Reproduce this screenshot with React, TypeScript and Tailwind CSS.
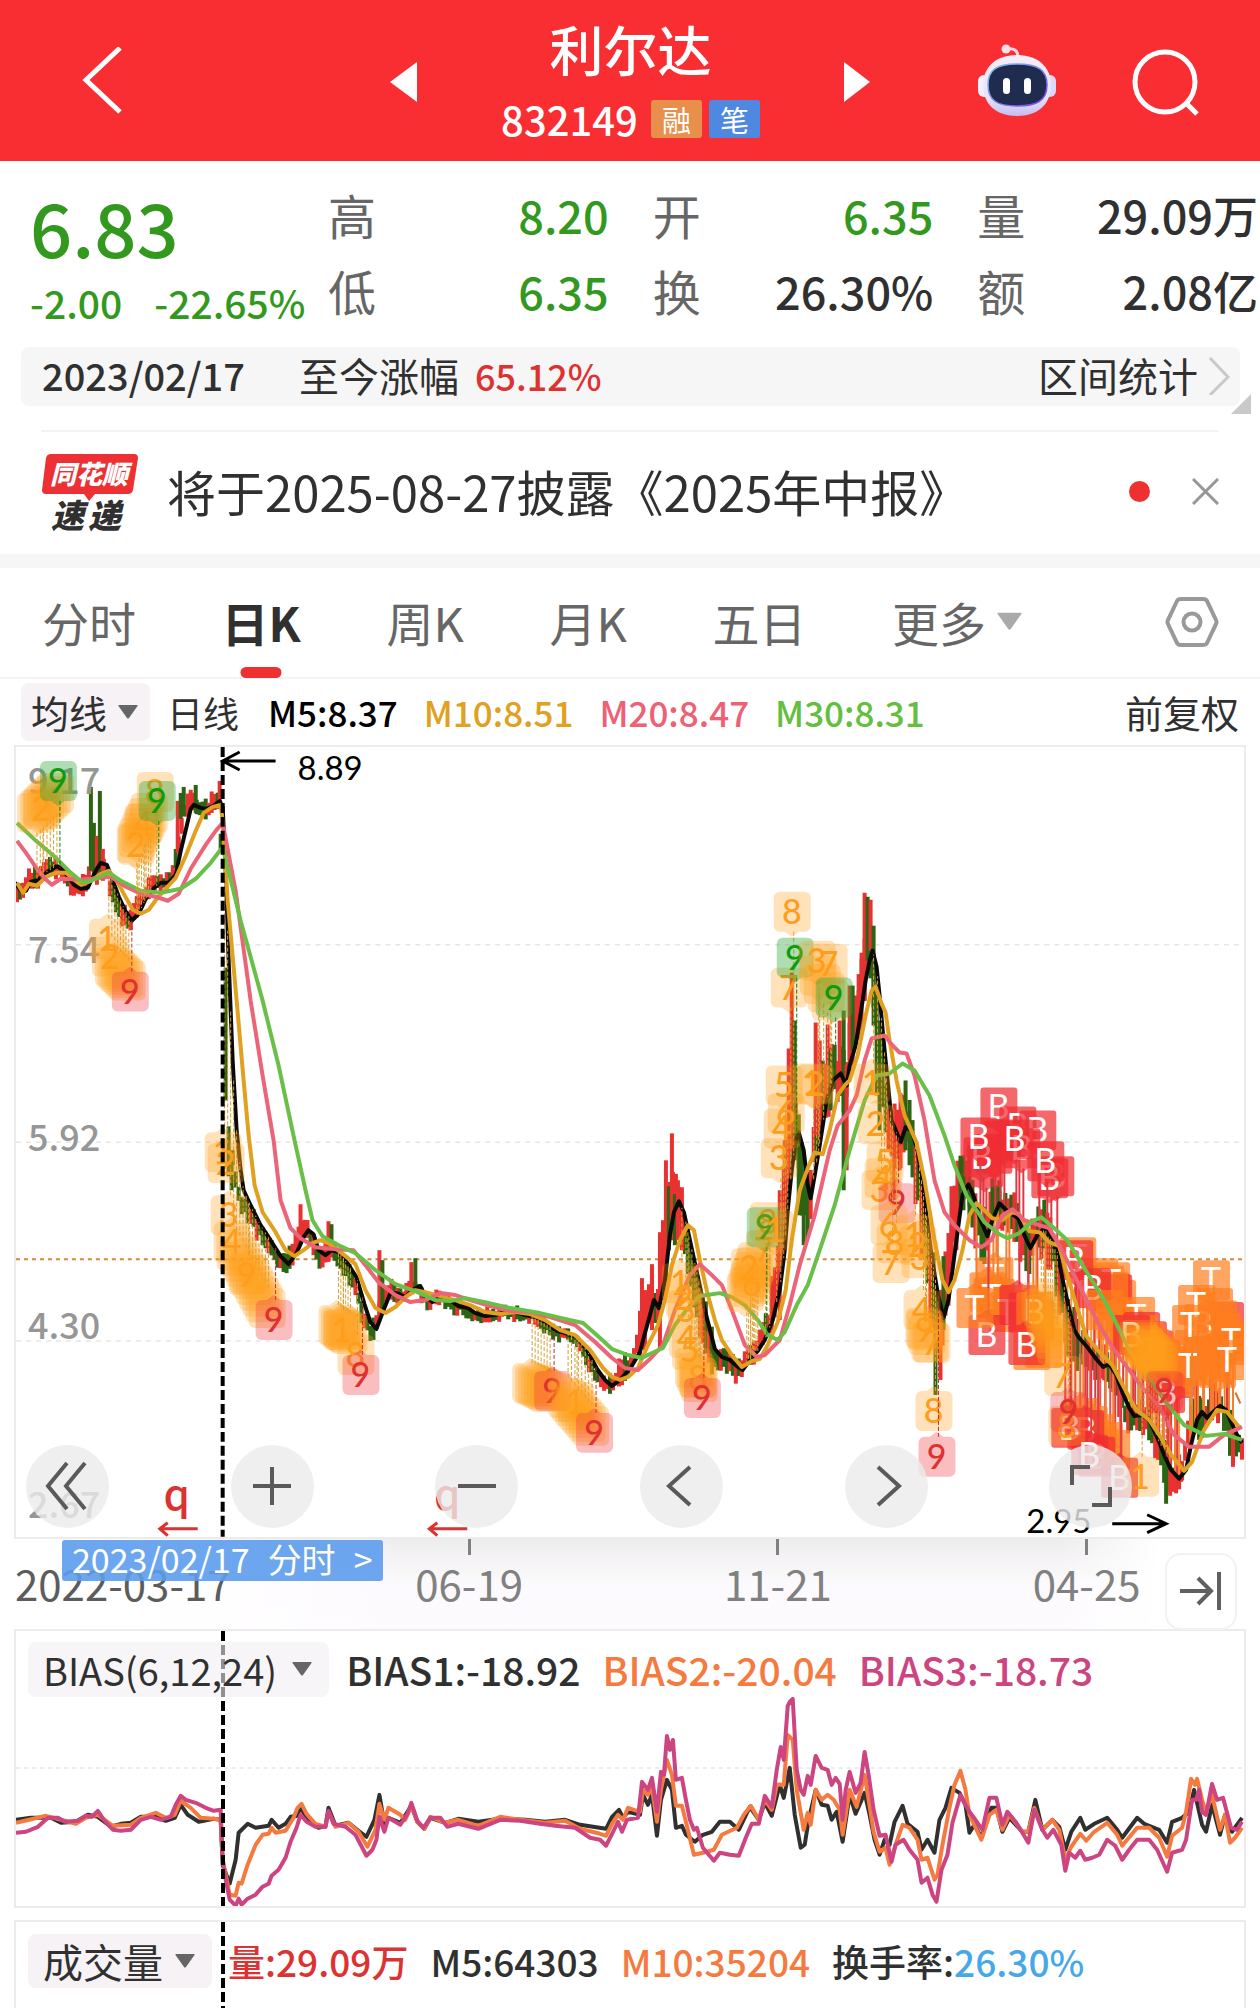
import React from "react";

type Pt = [number, number];

const parse = (s: string): Pt[] =>
  s
    .trim()
    .split(/\s+/)
    .map((p) => p.split(",").map(Number) as Pt);

const MA5 = parse(`14,882 20,890 25,890 30,881 35,880 40,877 45,872 50,869 56,865 60,868 67,875 73,884 80,888 87,887 91,878 96,868 100,862 106,864 112,880 118,896 125,911 131,920 138,913 145,898 152,888 160,882 168,882 175,874 180,850 186,825 190,808 193,804 200,807 206,808 213,805 219,800 222,806 225,870 228,960 232,1060 236,1130 240,1170 243,1190 250,1205 260,1225 270,1240 280,1256 288,1264 296,1253 303,1237 308,1230 313,1234 318,1250 325,1255 331,1250 338,1252 347,1263 356,1277 364,1304 370,1322 376,1329 382,1313 390,1293 396,1293 405,1297 412,1290 420,1286 425,1296 432,1302 440,1297 450,1300 458,1306 468,1308 475,1313 485,1316 495,1315 505,1312 515,1312 525,1315 535,1317 545,1322 555,1330 565,1333 577,1337 587,1350 597,1369 605,1380 612,1386 620,1380 630,1369 640,1352 645,1333 650,1315 654,1300 659,1308 665,1280 670,1235 674,1212 679,1201 684,1212 690,1240 697,1272 705,1310 715,1349 722,1357 730,1360 737,1366 743,1370 750,1360 758,1351 765,1340 773,1320 780,1290 785,1250 788,1210 792,1170 796,1140 799,1132 804,1150 808,1185 811,1198 815,1175 820,1145 827,1100 833,1080 841,1073 847,1085 850,1065 856,1045 860,1020 866,980 870,960 873,950 877,966 880,995 884,1040 888,1080 892,1120 897,1132 901,1142 906,1127 912,1130 918,1150 925,1200 932,1255 938,1292 944,1318 949,1300 953,1270 959,1225 963,1195 969,1184 974,1195 980,1217 988,1236 993,1220 1000,1203 1007,1210 1019,1218 1025,1235 1031,1248 1038,1235 1045,1228 1052,1240 1058,1252 1063,1278 1069,1305 1075,1330 1080,1338 1088,1347 1097,1359 1104,1367 1110,1364 1117,1375 1123,1392 1130,1408 1135,1416 1142,1415 1150,1420 1157,1435 1165,1455 1172,1470 1180,1479 1187,1470 1192,1445 1198,1420 1203,1412 1208,1418 1214,1412 1221,1406 1227,1410 1233,1424 1238,1435 1243,1443`);

const MA10 = parse(`16,882 22,892 28,883 36,885 45,876 55,872 65,872 72,878 80,884 90,880 100,873 108,870 116,880 124,895 132,909 140,913 148,909 156,898 165,888 175,877 185,855 195,830 203,812 212,806 220,804 222,820 227,900 236,1000 243,1080 248,1135 254,1185 262,1212 275,1232 285,1250 294,1256 303,1250 312,1243 320,1240 328,1243 340,1252 355,1264 365,1290 375,1308 385,1313 395,1307 405,1297 415,1290 425,1292 440,1296 455,1300 470,1305 485,1312 500,1314 515,1312 530,1314 545,1320 560,1330 575,1335 590,1350 603,1368 612,1377 620,1380 628,1377 638,1368 648,1345 658,1325 665,1300 672,1265 680,1240 688,1225 694,1230 700,1260 708,1295 715,1320 722,1340 732,1355 742,1367 752,1361 760,1359 768,1345 778,1322 786,1290 792,1240 800,1190 808,1168 815,1152 823,1154 830,1130 838,1095 845,1085 850,1080 858,1055 866,1015 872,990 876,986 882,1003 886,1012 890,1040 897,1080 905,1115 917,1142 925,1180 935,1240 943,1280 949,1292 955,1280 963,1250 970,1215 977,1203 985,1210 993,1218 1003,1220 1013,1212 1020,1214 1030,1231 1040,1232 1050,1242 1060,1246 1068,1275 1077,1305 1087,1336 1100,1352 1113,1365 1125,1388 1137,1410 1150,1420 1162,1438 1172,1455 1185,1471 1193,1462 1205,1430 1218,1410 1228,1412 1240,1427`);

const MA20 = parse(`16,840 25,852 36,868 44,878 51,884 60,878 80,879 100,877 110,876 125,886 140,893 155,896 167,900 178,893 190,868 205,844 215,830 222,822 235,890 250,1000 262,1075 273,1140 280,1200 290,1228 300,1238 315,1247 335,1249 353,1250 365,1265 378,1282 395,1295 410,1302 425,1300 440,1293 455,1295 470,1300 490,1306 510,1311 530,1312 550,1317 575,1325 595,1342 612,1358 625,1368 638,1370 650,1359 663,1345 675,1310 690,1275 700,1264 712,1275 722,1285 732,1310 745,1345 757,1357 765,1355 780,1340 790,1305 800,1265 815,1215 830,1150 838,1125 850,1110 857,1095 865,1060 872,1038 885,1035 893,1045 900,1052 907,1053 915,1075 925,1120 935,1180 945,1212 955,1225 970,1240 982,1247 992,1240 1003,1215 1013,1209 1025,1220 1040,1225 1050,1228 1060,1245 1070,1265 1085,1295 1100,1325 1115,1350 1130,1370 1145,1390 1160,1407 1175,1435 1190,1447 1210,1447 1225,1435 1243,1427`);

const MA30 = parse(`16,822 35,840 55,857 70,872 82,882 95,878 108,872 120,880 140,890 160,892 180,888 195,878 210,862 222,846 240,920 262,1000 278,1065 294,1140 305,1190 312,1220 322,1236 340,1246 355,1253 375,1270 395,1284 415,1291 435,1300 450,1301 465,1298 485,1302 510,1308 540,1313 565,1319 583,1323 600,1338 612,1349 628,1355 642,1358 652,1353 663,1348 675,1325 688,1308 700,1296 720,1293 732,1297 745,1305 758,1320 768,1335 778,1340 785,1332 797,1305 808,1285 820,1250 835,1205 850,1150 865,1100 877,1075 890,1073 903,1063 915,1070 930,1095 945,1135 955,1165 967,1195 985,1222 1000,1234 1008,1238 1020,1233 1033,1221 1042,1217 1055,1228 1068,1240 1085,1268 1105,1300 1118,1325 1130,1350 1145,1370 1165,1400 1185,1425 1207,1436 1225,1434 1243,1440`);

const BIAS1 = parse(`15,1820 30,1818 50,1818 60,1823 75,1822 87,1815 97,1817 110,1827 120,1824 130,1823 140,1817 155,1817 165,1821 174,1818 180,1805 187,1815 198,1822 213,1819 220,1820 222,1865 229,1884 235,1860 238,1833 247,1824 255,1828 268,1826 271,1820 278,1828 285,1824 290,1817 297,1816 300,1806 306,1820 318,1828 325,1826 328,1808 335,1826 348,1823 358,1831 366,1837 374,1820 379,1795 384,1824 388,1818 400,1823 411,1806 417,1822 424,1829 430,1818 445,1823 458,1819 478,1822 500,1819 525,1820 545,1822 565,1820 580,1825 606,1829 612,1817 619,1810 623,1818 628,1812 640,1815 643,1795 648,1805 652,1795 657,1836 661,1800 667,1780 672,1790 676,1828 682,1826 686,1835 695,1842 703,1835 712,1832 720,1822 730,1822 739,1830 750,1807 759,1820 765,1803 772,1816 780,1785 784,1798 790,1768 795,1815 801,1848 805,1845 809,1820 816,1790 822,1805 828,1806 832,1820 837,1812 843,1842 850,1795 856,1814 865,1793 870,1815 875,1840 880,1855 885,1840 890,1845 895,1822 903,1806 908,1824 918,1832 922,1850 928,1840 935,1853 940,1820 946,1808 952,1788 960,1793 966,1805 970,1833 975,1825 982,1838 992,1808 997,1808 1003,1832 1010,1818 1023,1832 1029,1832 1036,1800 1043,1830 1053,1820 1060,1827 1066,1850 1072,1832 1081,1818 1086,1830 1095,1824 1108,1818 1118,1830 1123,1838 1138,1818 1145,1824 1160,1830 1168,1843 1173,1822 1183,1818 1190,1812 1195,1790 1203,1825 1207,1832 1213,1805 1221,1835 1226,1815 1233,1832 1243,1818`);

const BIAS2 = parse(`15,1823 28,1820 45,1816 60,1820 75,1824 85,1818 97,1815 112,1826 130,1825 140,1818 155,1813 165,1818 174,1815 180,1801 190,1808 200,1818 213,1819 220,1820 222,1860 229,1895 235,1896 238,1883 241,1884 247,1865 255,1845 262,1835 268,1834 271,1828 275,1833 285,1831 293,1818 297,1808 301,1804 306,1814 315,1824 325,1827 328,1812 335,1827 348,1823 358,1832 367,1847 375,1830 379,1804 384,1820 388,1808 400,1815 405,1820 411,1806 417,1822 424,1829 430,1817 445,1823 458,1820 478,1826 500,1817 520,1820 545,1823 565,1821 580,1829 600,1834 606,1836 612,1824 618,1815 623,1820 628,1808 640,1812 643,1790 648,1795 652,1788 657,1822 661,1790 667,1760 672,1775 676,1806 682,1806 686,1822 694,1855 703,1853 714,1850 722,1835 737,1828 744,1815 751,1806 759,1820 765,1800 772,1810 777,1785 784,1785 788,1735 793,1740 797,1790 804,1830 808,1813 811,1825 816,1790 822,1800 828,1795 834,1800 840,1810 843,1835 850,1790 857,1807 865,1775 869,1800 874,1832 880,1852 886,1848 890,1865 896,1845 903,1825 910,1828 918,1840 922,1860 928,1858 935,1880 938,1875 943,1845 950,1808 955,1785 961,1771 966,1790 970,1815 982,1840 990,1815 997,1810 1003,1830 1010,1815 1023,1832 1029,1832 1035,1808 1043,1830 1053,1820 1060,1830 1066,1860 1072,1847 1081,1834 1087,1841 1095,1832 1108,1823 1118,1835 1123,1846 1138,1828 1150,1828 1160,1838 1168,1857 1173,1836 1183,1828 1187,1812 1192,1779 1196,1785 1198,1779 1203,1800 1207,1812 1213,1795 1221,1830 1226,1815 1231,1843 1236,1838 1243,1828`);

const BIAS3 = parse(`15,1833 25,1832 37,1827 47,1818 57,1818 64,1822 77,1821 85,1816 91,1817 97,1811 103,1820 112,1830 120,1831 130,1830 140,1820 150,1817 160,1820 170,1817 175,1805 180,1796 185,1800 195,1803 205,1808 213,1811 220,1810 222,1860 225,1880 229,1900 235,1906 238,1899 241,1905 247,1899 255,1895 262,1887 268,1884 271,1876 278,1870 285,1858 290,1842 296,1828 300,1815 306,1822 315,1827 325,1827 328,1811 333,1824 345,1827 355,1835 366,1856 372,1850 376,1840 379,1817 384,1832 388,1818 400,1825 407,1814 411,1803 417,1821 423,1828 430,1818 440,1818 447,1827 458,1824 478,1829 500,1820 520,1821 540,1824 555,1826 575,1828 590,1838 600,1840 606,1846 613,1832 618,1822 622,1832 627,1820 638,1818 642,1782 648,1790 652,1778 657,1812 661,1772 664,1775 667,1736 670,1750 673,1740 676,1780 682,1778 686,1800 690,1820 694,1830 697,1828 703,1848 714,1861 720,1853 730,1855 739,1856 746,1838 752,1824 759,1824 765,1796 772,1807 777,1770 781,1747 784,1760 788,1706 790,1702 793,1699 797,1770 801,1790 804,1795 808,1776 811,1785 816,1756 822,1768 828,1770 832,1785 836,1778 840,1784 843,1820 846,1790 850,1772 856,1793 861,1783 865,1752 869,1775 874,1810 880,1836 886,1835 892,1862 896,1845 904,1840 910,1850 918,1860 922,1883 928,1878 933,1895 937,1902 942,1870 948,1855 953,1823 961,1795 966,1805 970,1812 976,1820 983,1830 990,1798 997,1798 1003,1825 1008,1812 1017,1823 1029,1843 1035,1810 1043,1830 1048,1838 1054,1830 1062,1845 1066,1871 1070,1853 1076,1858 1081,1851 1086,1860 1093,1858 1100,1855 1108,1840 1116,1846 1123,1860 1130,1850 1138,1840 1150,1840 1158,1850 1168,1872 1173,1853 1183,1850 1187,1840 1193,1800 1197,1800 1200,1790 1203,1812 1207,1815 1213,1784 1218,1800 1224,1798 1232,1828 1238,1830 1243,1822`);

const at = (line: Pt[], x: number) => {
  for (let i = 1; i < line.length; i++) {
    if (x <= line[i][0]) {
      const [x0, y0] = line[i - 1];
      const [x1, y1] = line[i];
      return y0 + ((y1 - y0) * (x - x0)) / (x1 - x0);
    }
  }
  return line[line.length - 1][1];
};

const noise = (n: number) => {
  const v = Math.sin(n * 12.9898) * 43758.5453;
  return v - Math.floor(v);
};

const RED = "#e83232";
const GREEN = "#2d6414";

const range = (x: number) => {
  if (x < 222) return 13;
  if (x < 400) return 13;
  if (x < 610) return 9;
  if (x < 640) return 16;
  if (x < 715) return 30;
  if (x < 770) return 14;
  if (x < 960) return 42;
  if (x < 1080) return 32;
  return 20;
};

type Bar = { x: number; top: number; bottom: number; color: string };

const bars: Bar[] = [];
for (let x = 16; x < 1244; x += 3) {
  if (x > 220 && x < 232) continue;
  const r = range(x);
  const slope = at(MA5, x + 4) - at(MA5, x - 2);
  const mid = at(MA5, x) + slope * 0.8 + (noise(x) - 0.5) * r * 0.5;
  const h = r * (0.7 + noise(x + 7) * 1.1);
  const up = noise(x + 3) < (slope < 0 ? 0.8 : 0.35);
  bars.push({ x, top: mid - h / 2, bottom: mid + h / 2, color: up ? RED : GREEN });
}

const spike = (x: number, top: number, bottom: number, c: "r" | "g") =>
  bars.push({ x, top, bottom, color: c === "r" ? RED : GREEN });
spike(90, 786, 870, "g");
spike(93, 822, 878, "g");
spike(96, 835, 884, "r");
spike(99, 790, 872, "g");
spike(102, 848, 880, "r");
spike(177, 800, 852, "r");
spike(180, 792, 818, "g");
spike(183, 786, 815, "g");
spike(195, 784, 812, "g");
spike(219, 780, 808, "r");
spike(225, 967, 1100, "g");
spike(228, 1126, 1176, "g");
spike(231, 1150, 1190, "g");
spike(300, 1204, 1236, "r");
spike(328, 1221, 1252, "r");
spike(331, 1224, 1250, "g");
spike(379, 1250, 1318, "r");
spike(382, 1260, 1310, "g");
spike(411, 1262, 1290, "r");
spike(415, 1258, 1288, "g");
spike(642, 1278, 1340, "r");
spike(645, 1290, 1350, "r");
spike(652, 1264, 1330, "r");
spike(660, 1232, 1350, "r");
spike(663, 1220, 1300, "r");
spike(666, 1160, 1290, "r");
spike(669, 1186, 1250, "g");
spike(672, 1133, 1240, "r");
spike(675, 1194, 1245, "g");
spike(678, 1180, 1240, "r");
spike(682, 1187, 1250, "r");
spike(780, 1190, 1320, "r");
spike(785, 1140, 1250, "r");
spike(789, 1048, 1190, "r");
spike(792, 972, 1150, "r");
spike(795, 1020, 1160, "g");
spike(799, 1150, 1215, "g");
spike(804, 1190, 1245, "g");
spike(816, 1022, 1135, "r");
spike(820, 1040, 1120, "r");
spike(828, 1024, 1080, "r");
spike(831, 1050, 1110, "g");
spike(840, 1020, 1090, "r");
spike(844, 1010, 1190, "g");
spike(847, 1064, 1170, "r");
spike(850, 985, 1075, "r");
spike(853, 985, 1050, "g");
spike(859, 990, 1040, "r");
spike(862, 952, 1030, "r");
spike(865, 892, 1000, "r");
spike(868, 896, 960, "g");
spike(871, 899, 950, "r");
spike(874, 925, 1025, "g");
spike(877, 995, 1095, "g");
spike(880, 1020, 1130, "g");
spike(894, 1110, 1200, "r");
spike(900, 1114, 1170, "r");
spike(906, 1080, 1150, "g");
spike(936, 1300, 1395, "g");
spike(941, 1290, 1380, "r");
spike(944, 1256, 1330, "g");
spike(952, 1186, 1270, "r");
spike(957, 1190, 1250, "r");
spike(964, 1155, 1210, "g");
spike(970, 1145, 1215, "g");
spike(993, 1178, 1230, "g");
spike(1000, 1180, 1215, "g");
spike(1167, 1440, 1504, "g");
spike(1171, 1470, 1496, "r");
spike(1174, 1474, 1492, "r");
spike(1178, 1472, 1486, "r");
spike(1182, 1466, 1482, "r");
spike(1197, 1378, 1425, "r");
spike(1200, 1396, 1440, "g");
spike(1203, 1400, 1438, "g");
spike(1212, 1352, 1420, "r");
spike(1215, 1382, 1415, "r");
spike(1231, 1410, 1456, "g");
spike(1234, 1420, 1467, "r");

type Kind = "o" | "g" | "r" | "B" | "T";
type Tag = { x: number; y: number; label: string; kind: Kind };

const FILL: Record<Kind, string> = {
  o: "rgba(255,160,25,0.3)",
  g: "rgba(40,165,50,0.38)",
  r: "rgba(238,50,60,0.32)",
  B: "rgba(240,45,50,0.72)",
  T: "rgba(255,125,30,0.7)",
};
const INK: Record<Kind, string> = {
  o: "#ff9d1c",
  g: "#0d9a0d",
  r: "#e03030",
  B: "#ffffff",
  T: "#ffffff",
};
const STEM: Record<Kind, string> = {
  o: "#d8a030",
  g: "#0d7a0d",
  r: "#c03030",
  B: "#dc3a46",
  T: "#f08030",
};

/* A row of overlapping tags whose labels are hidden by the ones above them. */
const run = (x0: number, y0: number, x1: number, y1: number, n: number, kind: Kind = "o"): Tag[] =>
  Array.from({ length: n }, (_, i) => ({
    x: x0 + ((x1 - x0) * i) / (n - 1),
    y: y0 + ((y1 - y0) * i) / (n - 1),
    label: "",
    kind,
  }));
const t = (x: number, y: number, label: string, kind: Kind = "o"): Tag => ({ x, y, label, kind });

const numberTags: Tag[] = [
  ...run(34, 812, 54, 792, 7),
  t(40, 808, "2"),
  t(57, 780, "9", "g"),
  ...run(134, 842, 148, 812, 7),
  t(135, 844, "2"),
  t(142, 823, "4"),
  t(154, 791, "8"),
  t(156, 800, "9", "g"),
  t(106, 938, "1"),
  t(109, 956, "2"),
  ...run(112, 966, 126, 980, 6),
  t(129, 991, "9", "r"),
  t(222, 1152, "1"),
  t(225, 1163, "2"),
  t(228, 1215, "3"),
  t(231, 1242, "4"),
  ...run(234, 1250, 266, 1308, 11),
  t(246, 1275, "9"),
  t(273, 1320, "9", "r"),
  ...run(336, 1325, 348, 1334, 6),
  t(341, 1330, "1"),
  t(355, 1355, "8"),
  t(360, 1375, "9", "r"),
  ...run(530, 1383, 548, 1392, 7),
  t(552, 1391, "9", "r"),
  ...run(566, 1398, 590, 1426, 8),
  t(575, 1402, "1"),
  t(594, 1433, "9", "r"),
  t(680, 1283, "1"),
  t(684, 1298, "2"),
  t(686, 1310, "3"),
  t(687, 1338, "4"),
  t(690, 1350, "5"),
  ...run(693, 1368, 699, 1382, 4),
  t(698, 1378, "8"),
  t(702, 1398, "9", "r"),
  ...run(745, 1292, 756, 1262, 7),
  t(749, 1268, "2"),
  t(752, 1284, "6"),
  t(764, 1250, "7"),
  t(768, 1222, "8"),
  t(765, 1227, "9", "g"),
  t(775, 1230, "1"),
  t(779, 1158, "3"),
  t(782, 1128, "4"),
  t(786, 1113, "6"),
  t(784, 1085, "5"),
  t(789, 987, "7"),
  t(812, 1083, "1"),
  t(815, 1084, "2"),
  t(792, 911, "8"),
  t(795, 957, "9", "g"),
  t(817, 960, "3"),
  t(829, 963, "7"),
  ...run(818, 975, 830, 1000, 4),
  t(834, 997, "9", "g"),
  t(872, 1083, "1"),
  t(876, 1124, "2"),
  t(885, 1162, "5"),
  t(883, 1178, "4"),
  t(880, 1190, "3"),
  t(897, 1203, "9", "r"),
  t(889, 1225, "6"),
  t(895, 1243, "8"),
  t(891, 1263, "7"),
  t(914, 1235, "1"),
  t(918, 1245, "2"),
  t(920, 1258, "3"),
  t(922, 1310, "4"),
  ...run(924, 1328, 930, 1342, 3),
  t(925, 1330, "9"),
  t(932, 1343, "7"),
  t(934, 1411, "8"),
  t(937, 1457, "9", "r"),
  ...run(1040, 1302, 1056, 1345, 8),
  t(1063, 1376, "7"),
  t(1067, 1426, "8"),
  t(1069, 1412, "9", "r"),
  ...run(1138, 1340, 1160, 1362, 10),
  t(1148, 1350, "2"),
  t(1141, 1477, "1"),
  t(1165, 1391, "9", "r"),
];

const signalTags: Tag[] = [
  t(999, 1107, "B", "B"),
  t(1018, 1126, "B", "B"),
  t(1038, 1130, "B", "B"),
  ...run(985, 1167, 1003, 1140, 3, "B"),
  t(1022, 1148, "B", "B"),
  t(982, 1157, "B", "B"),
  t(979, 1137, "B", "B"),
  t(1015, 1139, "B", "B"),
  t(1056, 1176, "B", "B"),
  t(1050, 1178, "B", "B"),
  t(1046, 1161, "B", "B"),
  t(995, 1277, "T", "T"),
  ...run(988, 1292, 1005, 1305, 3, "T"),
  t(992, 1297, "T", "T"),
  t(1008, 1312, "T", "T"),
  t(987, 1335, "B", "B"),
  t(975, 1308, "T", "T"),
  ...run(1018, 1305, 1036, 1320, 3, "B"),
  t(1035, 1312, "B", "T"),
  ...run(1032, 1350, 1044, 1348, 2, "T"),
  t(1027, 1345, "B", "B"),
  t(1078, 1257, "T", "T"),
  ...run(1100, 1278, 1118, 1300, 4, "T"),
  t(1112, 1282, "T", "T"),
  t(1114, 1294, "", "B"),
  t(1110, 1292, "", "T"),
  t(1075, 1260, "B", "B"),
  t(1093, 1288, "B", "B"),
  ...run(1105, 1310, 1125, 1330, 3, "T"),
  t(1137, 1317, "T", "T"),
  ...run(1142, 1332, 1176, 1378, 6, "B"),
  ...run(1140, 1335, 1174, 1376, 7, "T"),
  t(1132, 1335, "B", "B"),
  t(1167, 1393, "B", "B"),
  t(1212, 1280, "T", "T"),
  t(1226, 1322, "", "B"),
  ...run(1215, 1308, 1228, 1345, 4, "T"),
  t(1203, 1324, "B", "T"),
  ...run(1194, 1350, 1218, 1368, 4, "T"),
  t(1189, 1366, "T", "T"),
  t(1197, 1305, "T", "T"),
  t(1191, 1325, "T", "T"),
  t(1232, 1341, "T", "T"),
  t(1228, 1360, "T", "T"),
  ...run(1082, 1418, 1112, 1450, 5, "T"),
  t(1086, 1430, "B", "B"),
  t(1070, 1428, "B", "B"),
  t(1097, 1457, "B", "B"),
  t(1090, 1455, "B", "B"),
  t(1120, 1478, "B", "B"),
];

function TagMark({ tag }: { tag: Tag }) {
  const { x, y, kind, label } = tag;
  const price = at(MA5, x + 2);
  const signal = kind === "B" || kind === "T";
  const dir = price > y ? 1 : -1;
  const edge = y + dir * 20;
  return (
    <g>
      {Math.abs(price - y) > 30 && (
        <line
          x1={x + 2}
          x2={x + 2}
          y1={edge}
          y2={price}
          stroke={STEM[kind]}
          strokeWidth={signal ? 2 : 1}
          strokeDasharray={signal ? undefined : "4 2"}
        />
      )}
      <rect x={x - 18} y={y - 20} width={37} height={40} rx={signal ? 3 : 6} fill={FILL[kind]} />
      <path d={`M${x - 7} ${edge} L${x} ${edge + dir * 5} L${x + 7} ${edge} Z`} fill={FILL[kind]} />
      {label && (
        <text x={x} y={y + 12} textAnchor="middle" fontSize={34} fill={INK[kind]} fontWeight={signal ? 400 : 500}>
          {label}
        </text>
      )}
    </g>
  );
}

/* Thin stems between the signal tags and the falling price on the right side. */
const stems = Array.from({ length: 30 }, (_, i) => {
  const x = 1064 + i * 4;
  return { x, y1: Math.min(at(MA5, x) - 10, 1275 + i * 4), y2: at(MA5, x), color: i % 3 === 0 ? "#dc3a46" : "#f59a40" };
}).concat(
  Array.from({ length: 12 }, (_, i) => {
    const x = 1066 + i * 5;
    return { x, y1: at(MA5, x), y2: 1415 + i * 4, color: i % 2 === 0 ? "#dc3a46" : "#e85050" };
  })
);

function Line({ pts, color, w = 4 }: { pts: Pt[]; color: string; w?: number }) {
  return (
    <polyline
      points={pts.map((p) => p.join(",")).join(" ")}
      fill="none"
      stroke={color}
      strokeWidth={w}
      strokeLinejoin="round"
    />
  );
}

const CHART_FONT = "Lato, 'Noto Sans CJK SC', sans-serif";

function PriceChart() {
  return (
    <svg viewBox="15 746 1230 791" className="block h-auto w-full" role="img" aria-label="日K">
      {[944, 1142, 1341].map((y) => (
        <line key={y} x1={15} x2={1245} y1={y} y2={y} stroke="#e6e6e6" strokeWidth={1.5} strokeDasharray="5 5" />
      ))}
      <line x1={15} x2={1245} y1={1259} y2={1259} stroke="#d08a3c" strokeWidth={2} strokeDasharray="4 4" />
      {bars.map((b, i) => (
        <rect key={i} x={b.x - 2} y={b.top} width={4} height={b.bottom - b.top} fill={b.color} />
      ))}
      {stems.map((s, i) => (
        <line key={i} x1={s.x} x2={s.x} y1={s.y1} y2={s.y2} stroke={s.color} strokeWidth={2} />
      ))}
      <path d="M1230 1378L1242 1405" stroke="#d9702a" strokeWidth={2} strokeDasharray="12 4" />
      <g fontFamily={CHART_FONT}>
        {signalTags.map((tag, i) => (
          <TagMark key={i} tag={tag} />
        ))}
      </g>
      <Line pts={MA5} color="#0a0a0a" />
      <Line pts={MA10} color="#e0a020" />
      <Line pts={MA20} color="#ec6478" />
      <Line pts={MA30} color="#6abf48" />
      <g fill="#969696" fontSize={36} fontWeight={500} fontFamily="'Noto Sans CJK SC', sans-serif">
        <text x={27} y={793}>9.17</text>
        <text x={27} y={962}>7.54</text>
        <text x={27} y={1151}>5.92</text>
        <text x={27} y={1339}>4.30</text>
        <text x={27} y={1518}>2.67</text>
      </g>
      <g fontFamily={CHART_FONT}>
        {numberTags.map((tag, i) => (
          <TagMark key={i} tag={tag} />
        ))}
      </g>
      <line x1={222} x2={222} y1={746} y2={1537} stroke="#000" strokeWidth={4} strokeDasharray="10 4" />
      <g fill="none" stroke="#000" strokeWidth={3}>
        <path d="M275 760H223M239 751L222 760L239 769" />
        <path d="M1113 1524H1166M1148 1515L1167 1524L1148 1533" />
      </g>
      <g fontFamily={CHART_FONT} fontSize={33} fill="#000">
        <text x={297} y={779}>8.89</text>
        <text x={1027} y={1533}>2.95</text>
      </g>
      <g fill="#dc3232" fontFamily="'Noto Sans CJK SC', sans-serif" fontWeight={500} fontSize={42} textAnchor="middle">
        <text x={176} y={1510}>q</text>
        <text x={447} y={1510}>q</text>
      </g>
      <g fill="none" stroke="#dc3232" strokeWidth={3}>
        <path d="M197 1529H160M167 1523L159 1529L167 1536" />
        <path d="M467 1529H430M437 1523L429 1529L437 1536" />
      </g>
    </svg>
  );
}

const DASH_LINE =
  "pointer-events-none absolute inset-y-0 left-[205px] w-1 bg-[repeating-linear-gradient(to_bottom,#000_0,#000_10px,transparent_10px,transparent_14px)]";

function Down({ className }: { className: string }) {
  return (
    <svg viewBox="0 0 20 14" className={className} aria-hidden="true">
      <path d="M1 0H19Q20 0 19.500 1L11 13Q10 14 9 13L.5 1Q0 0 1 0Z" fill="currentColor" />
    </svg>
  );
}

function Robot() {
  return (
    <svg viewBox="978 42 78 76" className="h-[76px] w-[78px]" aria-hidden="true">
      <defs>
        <linearGradient id="shell" x1="0" y1="0" x2="0" y2="1">
          <stop offset="0" stopColor="#f6eef8" />
          <stop offset="0.7" stopColor="#e6e4fa" />
          <stop offset="1" stopColor="#c4bdf0" />
        </linearGradient>
        <linearGradient id="rim" x1="0" y1="0" x2="1" y2="1">
          <stop offset="0" stopColor="#7fc8ee" />
          <stop offset="1" stopColor="#7a3fe0" />
        </linearGradient>
      </defs>
      <path d="M1007 47Q1018 45 1018 56" fill="none" stroke="#f3d3e0" strokeWidth="3" />
      <circle cx="1006" cy="47" r="4.500" fill="#f8dfe8" />
      <rect x="978" y="73" width="12" height="22" rx="6" fill="#f3f0fc" />
      <rect x="1044" y="73" width="12" height="22" rx="6" fill="#ddd8f8" />
      <path d="M1017 53C1040 53 1051 67 1051 83C1051 102 1038 114 1017 114C996 114 983 102 983 83C983 67 994 53 1017 53Z" fill="url(#shell)" />
      <path d="M1017 62C1038 62 1047 68 1047 83C1047 99 1036 104 1017 104C998 104 988 99 988 83C988 68 996 62 1017 62Z" fill="#1f2c50" stroke="url(#rim)" strokeWidth="1.500" />
      <rect x="1003" y="76" width="7" height="16" rx="3.500" fill="#fff" />
      <rect x="1024" y="76" width="7" height="16" rx="3.500" fill="#fff" />
    </svg>
  );
}

function Stat({ label, value, tone }: { label: string; value: string; tone: string }) {
  return (
    <div className="flex h-[76px] items-center justify-between">
      <dt className="pb-1 text-[48px] leading-none text-[#666]">{label}</dt>
      <dd className={`pb-1 text-[45px] leading-none font-medium whitespace-nowrap ${tone}`}>{value}</dd>
    </div>
  );
}

const ROUND =
  "ml-[10px] flex size-[83px] items-center justify-center rounded-full bg-[#ebebeb]/80 text-[#5a5a5a]";

const tools: { name: string; d: string }[] = [
  { name: "最早", d: "M24 2L5 25L24 48M42 2L23 25L42 48" },
  { name: "放大", d: "M25 6V44M6 25H44" },
  { name: "缩小", d: "M6 25H44" },
  { name: "向左", d: "M33 6L12 25L33 44" },
  { name: "向右", d: "M17 6L38 25L17 44" },
  { name: "全屏", d: "M6 24V6H24M26 44H44V26" },
];

export default function App() {
  return (
    <main className="flex min-h-screen flex-col overflow-x-hidden bg-white font-['Noto_Sans_CJK_SC',sans-serif] text-[#303030]">
      <header className="grid grid-cols-[1fr_auto_1fr] items-center bg-[#f92e33] pt-[13px] pb-[10px] text-white">
        <button aria-label="返回" className="ml-[82px] w-fit">
          <svg viewBox="0 0 42 70" className="h-[70px] w-[42px]" fill="none" stroke="currentColor" strokeWidth="5">
            <path d="M38 1L4 33L38 65" />
          </svg>
        </button>
        <div className="flex items-center gap-[84px]">
          <button aria-label="上一只">
            <svg viewBox="0 0 27 40" className="h-10 w-[27px]" fill="currentColor">
              <path d="M27 0V40L0 20Z" />
            </svg>
          </button>
          <div className="flex flex-col items-center">
            <h1 className="text-[54px] leading-[72px] font-medium">利尔达</h1>
            <div className="flex items-center gap-[7px] pt-[2px]">
              <span className="mr-[6px] text-[40px] leading-[64px] font-medium">832149</span>
              <span className="rounded-[3px] bg-[#e88f4c] px-[11px] text-[29px] leading-[38px]">融</span>
              <span className="rounded-[3px] bg-[#4f88e0] px-[11px] text-[29px] leading-[38px]">笔</span>
            </div>
          </div>
          <button aria-label="下一只">
            <svg viewBox="0 0 26 40" className="h-10 w-[26px]" fill="currentColor">
              <path d="M0 0V40L26 20Z" />
            </svg>
          </button>
        </div>
        <div className="flex items-center justify-end gap-[76px] pr-[60px]">
          <button aria-label="智能助手">
            <Robot />
          </button>
          <button aria-label="搜索">
            <svg viewBox="0 0 68 68" className="size-[68px]" fill="none" stroke="currentColor" strokeWidth="5">
              <circle cx="33" cy="34" r="30" />
              <path d="M53 54L65 66" />
            </svg>
          </button>
        </div>
      </header>

      <section className="flex pt-[17px] pr-[2px] pb-[17px]">
        <div className="w-[328px] shrink-0 pl-[30px] font-medium text-[#32991e]">
          <div className="text-[74px] leading-[96px]">6.83</div>
          <div className="flex gap-[32px] text-[39px] leading-[56px] whitespace-nowrap">
            <span>-2.00</span>
            <span>-22.65%</span>
          </div>
        </div>
        <dl className="grid flex-1 grid-cols-3 gap-x-[44px]">
          <Stat label="高" value="8.20" tone="text-[#32991e]" />
          <Stat label="开" value="6.35" tone="text-[#32991e]" />
          <Stat label="量" value="29.09万" tone="" />
          <Stat label="低" value="6.35" tone="text-[#32991e]" />
          <Stat label="换" value="26.30%" tone="" />
          <Stat label="额" value="2.08亿" tone="" />
        </dl>
      </section>

      <section className="relative mr-5 ml-[21px] flex items-center rounded-lg bg-[#f6f6f6] pr-[10px] pb-[3px] pl-[21px] leading-[56px]">
        <span className="text-[38px] font-medium">2023/02/17</span>
        <span className="ml-[54px] text-[40px]">至今涨幅</span>
        <span className="ml-[16px] text-[36px] font-medium text-[#dc3232]">65.12%</span>
        <button className="ml-auto flex items-center gap-[10px] text-[40px]">
          区间统计
          <svg viewBox="0 0 22 40" className="h-10 w-[22px]" fill="none" stroke="#c8c8c8" strokeWidth="3">
            <path d="M2 3L20 22L2 40" />
          </svg>
        </button>
        <svg viewBox="0 0 20 20" className="absolute -right-[11px] -bottom-[8px] size-5" aria-hidden="true">
          <path d="M20 0V20H0Z" fill="#c9c9c9" />
        </svg>
      </section>

      <section className="mx-[41px] mt-[24px] flex h-[124px] items-center border-t-2 border-[#f3f3f3] pb-[3px]">
        <svg viewBox="0 0 98 80" className="h-[80px] w-[98px] shrink-0 overflow-visible" role="img" aria-label="同花顺速递">
          <path d="M10 2H93Q97 2 97 6L92 38Q91 42 87 42H54L48 49L43 42H5Q1 42 1 38L5 6Q6 2 10 2Z" fill="#ec3034" />
          <g fontFamily="'Noto Sans CJK SC', sans-serif" fontWeight="900" fontStyle="italic">
            <text x="9" y="32" fontSize="26" fill="#fff">同花顺</text>
            <text x="10" y="76" fontSize="33" fill="#303030">速</text>
            <text x="47" y="76" fontSize="33" fill="#303030">递</text>
          </g>
        </svg>
        <p className="ml-[28px] flex-1 pb-[2px] text-[49px] leading-[60px] whitespace-nowrap">将于2025-08-27披露《2025年中报》</p>
        <span className="mr-[42px] size-[21px] rounded-full bg-[#ee3030]" />
        <button aria-label="关闭">
          <svg viewBox="0 0 27 27" className="size-[27px]" fill="none" stroke="#969696" strokeWidth="3">
            <path d="M1 1L26 26M26 1L1 26" />
          </svg>
        </button>
      </section>

      <div className="h-[14px] bg-[#f6f6f6]" />

      <nav className="flex items-center border-b-2 border-[#f3f3f3] pr-[41px] pb-[2px] pl-[42px] text-[47px] leading-[107px] text-[#666]">
        <div className="flex flex-1 items-center justify-between">
          <button>分时</button>
          <button className="relative font-bold text-[#303030]">
            日K
            <span className="absolute -bottom-[3px] left-1/2 h-[11px] w-[41px] -translate-x-1/2 rounded-full bg-[#ee3030]" />
          </button>
          <button>周K</button>
          <button>月K</button>
          <button>五日</button>
          <button className="flex items-center gap-[11px]">
            更多
            <Down className="h-[21px] w-[25px] text-[#aaa]" />
          </button>
        </div>
        <button aria-label="设置" className="ml-[143px]">
          <svg viewBox="0 0 54 52" className="h-[52px] w-[54px]" fill="none" stroke="#999" strokeWidth="4" strokeLinejoin="round">
            <path d="M16 3H38Q41 3 42 5L51 24Q52 26 51 28L42 47Q41 49 38 49H16Q13 49 12 47L3 28Q2 26 3 24L12 5Q13 3 16 3Z" />
            <circle cx="27" cy="26" r="8.500" />
          </svg>
        </button>
      </nav>

      <section className="flex h-[66px] items-center pr-[21px] pl-[21px] text-[36px] whitespace-nowrap">
        <button className="flex items-center gap-[11px] rounded-lg bg-[#f6f2f6] pr-[12px] pl-[10px] text-[38px] leading-[58px]">
          均线
          <Down className="h-[14px] w-5 text-[#666]" />
        </button>
        <span className="ml-[17px]">日线</span>
        <div className="ml-[29px] flex gap-[26px] text-[35px] font-medium">
          <span className="text-black">M5:8.37</span>
          <span className="text-[#e0a020]">M10:8.51</span>
          <span className="text-[#ee6074]">M20:8.47</span>
          <span className="text-[#64be40]">M30:8.31</span>
        </div>
        <button className="ml-auto pb-[2px] text-[38px]">前复权</button>
      </section>

      <section className="relative mx-[14px] border-2 border-[#ececec]">
        <PriceChart />
        <div className="absolute inset-x-0 bottom-[9px] grid grid-cols-6">
          {tools.map((tool) => (
            <button key={tool.name} aria-label={tool.name} className={ROUND}>
              <svg viewBox="0 0 50 50" className="size-[50px]" fill="none" stroke="currentColor" strokeWidth="4">
                <path d={tool.d} />
              </svg>
            </button>
          ))}
        </div>
      </section>

      <section className="relative h-[90px] bg-[linear-gradient(to_right,white_0%,white_10%,transparent_32%,transparent_84%,white_92%),linear-gradient(to_bottom,#ededed_0%,#f6f3f6_25%,#f8f8f8_40%,#fdfaff_50%,#fefbff_100%)] pr-[19px] pl-[15px]">
        <div className="grid grid-cols-[300fr_309fr_309fr_309fr] text-[42px] leading-[56px] text-[#808080]">
          <time className="pt-4 text-[#5c5c5c]">2022-03-17</time>
          {["06-19", "11-21", "04-25"].map((d) => (
            <div key={d} className="flex flex-col items-center">
              <span className="h-4 w-[3px] bg-[#808080]" />
              <time>{d}</time>
            </div>
          ))}
        </div>
        <button className="absolute top-px left-[62px] flex h-[41px] items-center rounded-[3px] bg-[#5c9cec]/90 px-[10px] pb-[3px] text-[34px] whitespace-nowrap text-white">
          2023/02/17<span className="mx-[18px]">分时</span>&gt;
        </button>
        <button
          aria-label="最新"
          className="absolute top-[14px] right-[23px] z-10 flex h-[77px] w-[72px] items-center justify-center rounded-2xl border-2 border-[#f4f1f4] bg-white"
        >
          <svg viewBox="0 0 42 38" className="h-[38px] w-[42px]" fill="none" stroke="#606060" strokeWidth="4">
            <path d="M0 19H31M18 6L31 19L18 32M39 0V38" />
          </svg>
        </button>
      </section>

      <section className="relative mx-[14px] border-2 border-[#ececec]">
        <div className={DASH_LINE} />
        <div className="relative flex items-center pt-[11px] pl-3 text-[39px] leading-[55px] whitespace-nowrap">
          <button className="mr-[17px] flex items-center gap-[15px] rounded-lg bg-[#f4eff4]/60 pr-[17px] pl-[15px] text-[38px]">
            BIAS(6,12,24)
            <Down className="h-[14px] w-5 text-[#666]" />
          </button>
          <div className="flex gap-[22px] font-medium">
            <span>BIAS1:-18.92</span>
            <span className="text-[#f57a40]">BIAS2:-20.04</span>
            <span className="text-[#cc4480]">BIAS3:-18.73</span>
          </div>
        </div>
        <svg viewBox="15 1697 1230 210" className="block h-auto w-full" role="img" aria-label="BIAS">
          <line x1={15} x2={1245} y1={1768} y2={1768} stroke="#e6e6e6" strokeWidth={1.5} strokeDasharray="4 4" />
          <Line pts={BIAS1} color="#303030" />
          <Line pts={BIAS2} color="#f57a40" />
          <Line pts={BIAS3} color="#cc4480" />
        </svg>
      </section>

      <section className="relative mx-[14px] mt-[12px] h-[87px] flex-1 border-2 border-b-0 border-[#ececec]">
        <div className={DASH_LINE} />
        <div className="relative flex items-center pt-[12px] pl-3 text-[37px] leading-[54px] whitespace-nowrap">
          <button className="mr-[16px] flex items-center gap-[12px] rounded-lg bg-[#f6f2f6] pr-[17px] pl-[15px] text-[40px]">
            成交量
            <Down className="h-[14px] w-5 text-[#666]" />
          </button>
          <div className="flex gap-[22px] font-medium">
            <span className="text-[#dc3232]">量:29.09万</span>
            <span>M5:64303</span>
            <span className="text-[#f57a40]">M10:35204</span>
            <span>
              换手率:<span className="text-[#46a8e8]">26.30%</span>
            </span>
          </div>
        </div>
      </section>
    </main>
  );
}
